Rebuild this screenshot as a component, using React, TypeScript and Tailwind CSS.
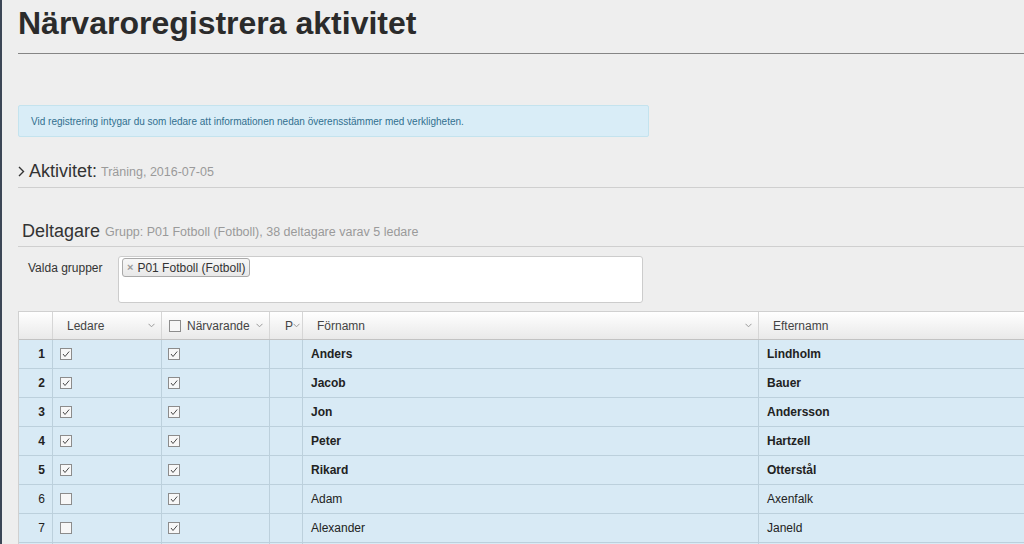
import React from "react";

const rows = [
  { n: 1, leader: true, first: "Anders", last: "Lindholm" },
  { n: 2, leader: true, first: "Jacob", last: "Bauer" },
  { n: 3, leader: true, first: "Jon", last: "Andersson" },
  { n: 4, leader: true, first: "Peter", last: "Hartzell" },
  { n: 5, leader: true, first: "Rikard", last: "Otterstål" },
  { n: 6, leader: false, first: "Adam", last: "Axenfalk" },
  { n: 7, leader: false, first: "Alexander", last: "Janeld" },
];

function Box({ checked }: { checked: boolean }) {
  return (
    <svg width="12" height="12" viewBox="0 0 12 12" className="shrink-0">
      <rect x="0.5" y="0.5" width="11" height="11" fill="#f7f7f7" stroke="#8c8c8c" />
      {checked && <polyline points="3,6 5,8.5 9.2,3.5" fill="none" stroke="#4a4a4a" strokeWidth="1" />}
    </svg>
  );
}

function Chev() {
  return (
    <svg width="7" height="5" viewBox="0 0 7 5" className="shrink-0">
      <polyline points="0.5,0.8 3.5,3.8 6.5,0.8" fill="none" stroke="#9a9a9a" strokeWidth="1" />
    </svg>
  );
}

const cols = "grid grid-cols-[34px_109px_108px_33px_456px_320px]";

export default function App() {
  return (
    <div className="w-[1024px] h-[544px] overflow-hidden bg-[#eeeeee] border-l-2 border-[#3c4656] font-['Liberation_Sans',Arial,sans-serif] text-[#333]">
      <div className="pl-[16px] flex flex-col">
        <h1 className="pt-[7px] h-[53px] text-[32px] leading-[32px] font-bold text-[#2b2b2b] whitespace-nowrap">
          Närvaroregistrera aktivitet
        </h1>
        <div className="h-px bg-[#858585]" />
        <div className="mt-[51px] w-[631px] h-[32px] flex items-center bg-[#d9edf7] border border-[#c4e3ee] rounded-[2px] pl-[12px] text-[10px] text-[#31708f]">
          Vid registrering intygar du som ledare att informationen nedan överensstämmer med verkligheten.
        </div>
        <div className="mt-[23px] h-[22px] flex items-center whitespace-nowrap">
          <svg width="7" height="11" viewBox="0 0 7 11" className="mr-[4px] mt-[1px]">
            <polyline points="1,1 5.5,5.5 1,10" fill="none" stroke="#333" strokeWidth="1.4" />
          </svg>
          <span className="text-[18px] text-[#333]">Aktivitet:</span>
          <span className="ml-[4px] text-[12.5px] text-[#9a9a9a] mt-[2px]">Träning, 2016-07-05</span>
        </div>
        <div className="mt-[5px] h-px bg-[#cfcfcf]" />
        <div className="mt-[32px] h-[22px] flex items-center pl-[4px] whitespace-nowrap">
          <span className="text-[18px] text-[#333]">Deltagare</span>
          <span className="ml-[5px] text-[12.5px] text-[#9a9a9a] mt-[2px]">Grupp: P01 Fotboll (Fotboll), 38 deltagare varav 5 ledare</span>
        </div>
        <div className="mt-[4px] h-px bg-[#cfcfcf]" />
        <div className="mt-[9px] flex">
          <div className="w-[100px] pl-[10px] pt-[3px] text-[12px] text-[#333]">Valda grupper</div>
          <div className="w-[525px] h-[47px] bg-white border border-[#cccccc] rounded-[3px] pt-[1px] pl-[3px] flex items-start">
            <span className="inline-flex items-center h-[19px] px-[4px] border border-[#aaaaaa] rounded-[3px] bg-gradient-to-b from-[#f7f7f7] to-[#e8e8e8] text-[12px] text-[#333] whitespace-nowrap">
              <span className="text-[#999] text-[11px] mr-[4px] font-bold">×</span>P01 Fotboll (Fotboll)
            </span>
          </div>
        </div>
        <div className="mt-[8px] border-l border-t border-[#d0d0d0] w-[1010px] text-[12px]">
          <div className={`${cols} h-[28px] bg-gradient-to-b from-[#ffffff] to-[#e9e9e9] border-b border-[#c2c2c2] text-[#444]`}>
            <div className="border-r border-[#d6d6d6]" />
            <div className="border-r border-[#d6d6d6] flex items-center pl-[14px] pr-[6px] justify-between">
              <span>Ledare</span>
              <Chev />
            </div>
            <div className="border-r border-[#d6d6d6] flex items-center pl-[7px] pr-[6px]">
              <Box checked={false} />
              <span className="ml-[6px]">Närvarande</span>
              <span className="ml-auto"><Chev /></span>
            </div>
            <div className="border-r border-[#d6d6d6] flex items-center pl-[15px]">
              <span>P</span>
              <Chev />
            </div>
            <div className="border-r border-[#d6d6d6] flex items-center pl-[14px] pr-[6px] justify-between">
              <span>Förnamn</span>
              <Chev />
            </div>
            <div className="flex items-center pl-[14px]">
              <span>Efternamn</span>
            </div>
          </div>
          {rows.map((r) => (
            <div key={r.n} className={`${cols} h-[29px] bg-[#d8eaf5] border-b border-[#bcd0dc] text-[#222]`}>
              <div className={`border-r border-[#bcd0dc] flex items-center justify-end pr-[7px] ${r.leader ? "font-bold" : ""}`}>
                {r.n}
              </div>
              <div className="border-r border-[#bcd0dc] flex items-center pl-[7px]">
                <Box checked={r.leader} />
              </div>
              <div className="border-r border-[#bcd0dc] flex items-center pl-[6px]">
                <Box checked={true} />
              </div>
              <div className="border-r border-[#bcd0dc]" />
              <div className={`border-r border-[#bcd0dc] flex items-center pl-[8px] ${r.leader ? "font-bold" : ""}`}>
                {r.first}
              </div>
              <div className={`flex items-center pl-[8px] ${r.leader ? "font-bold" : ""}`}>{r.last}</div>
            </div>
          ))}
          <div className={`${cols} h-[29px] bg-[#d8eaf5]`}>
            <div className="border-r border-[#bcd0dc]" />
            <div className="border-r border-[#bcd0dc]" />
            <div className="border-r border-[#bcd0dc]" />
            <div className="border-r border-[#bcd0dc]" />
            <div className="border-r border-[#bcd0dc]" />
            <div />
          </div>
        </div>
      </div>
    </div>
  );
}
